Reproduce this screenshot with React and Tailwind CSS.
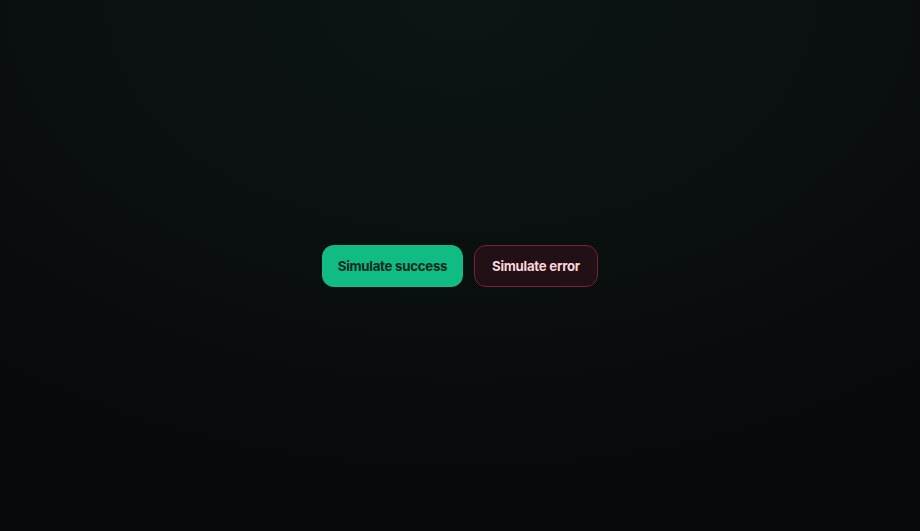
export default function App() {
  return (
    <div
      className="w-full h-[531px] flex items-center justify-center bg-[radial-gradient(ellipse_80%_90%_at_50%_0%,#0c1414_0%,#0a0f0f_55%,#070a0a_100%)]"
      style={{ fontFamily: "Inter, 'Noto Sans', sans-serif" }}
    >
      <div className="flex items-center gap-[11px] pt-[1px]">
        <button className="h-[42px] w-[141px] flex items-center justify-center pt-[2px] rounded-xl bg-[#10bb84] text-[#06291e] text-[13.25px] font-bold tracking-[-0.02em]">
          Simulate success
        </button>
        <button className="h-[42px] w-[124px] flex items-center justify-center pt-[2px] rounded-xl bg-[#211015] border border-[#7a2135] text-[#fcd3da] text-[13.25px] font-bold tracking-[-0.02em]">
          Simulate error
        </button>
      </div>
    </div>
  );
}
